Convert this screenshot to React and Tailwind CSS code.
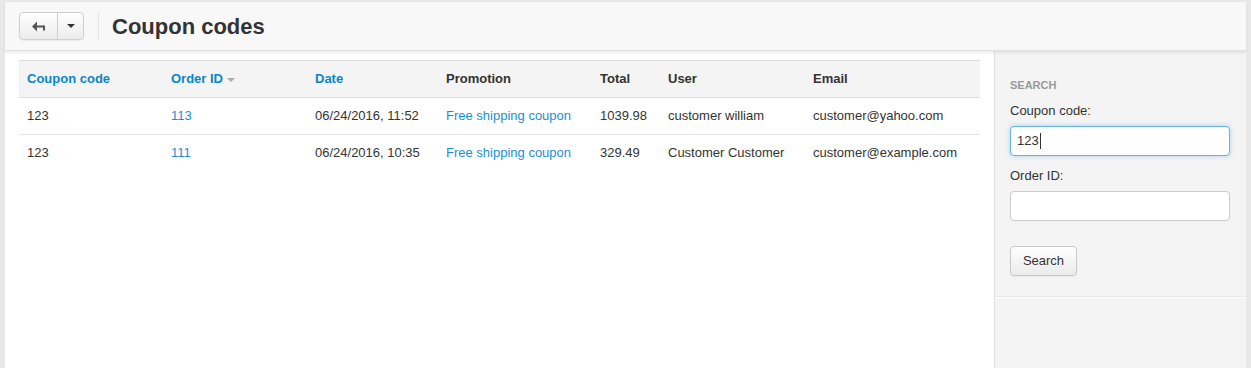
import React from "react";

const rows = [
  { code: "123", order: "113", date: "06/24/2016, 11:52", promo: "Free shipping coupon", total: "1039.98", user: "customer william", email: "customer@yahoo.com" },
  { code: "123", order: "111", date: "06/24/2016, 10:35", promo: "Free shipping coupon", total: "329.49", user: "Customer Customer", email: "customer@example.com" },
];

export default function App() {
  return (
    <div className="h-[368px] w-[1251px] overflow-hidden bg-[#e8e8e8] px-[5px] pt-[2px] text-[13px] text-[#333]" style={{ fontFamily: '"Liberation Sans", Arial, sans-serif' }}>
      <div className="flex h-full flex-col bg-white">
        <div className="relative z-10 flex h-[49px] items-center border-b border-[#e2e2e2] bg-[#f8f8f8] pl-[14px] shadow-[0_2px_3px_rgba(0,0,0,0.08)]">
          <div className="flex h-[28px] rounded-[4px] border border-[#cfcfcf] bg-gradient-to-b from-white to-[#ececec] shadow-[0_1px_1px_rgba(0,0,0,0.05)]">
            <div className="flex w-[38px] items-center justify-center border-r border-[#cfcfcf]">
              <svg width="16" height="11" viewBox="0 0 16 11">
                <path d="M6 0.5 L1 5.5 L6 10.5 Z" fill="#555" />
                <rect x="5" y="4.5" width="8" height="2" fill="#555" />
                <rect x="12" y="4.5" width="2" height="5" fill="#555" />
              </svg>
            </div>
            <div className="flex w-[25px] items-center justify-center">
              <svg width="8" height="4" viewBox="0 0 8 4"><path d="M0 0 H8 L4 4 Z" fill="#333" /></svg>
            </div>
          </div>
          <div className="ml-[14px] h-[28px] w-px bg-[#e4e4e4]" />
          <h1 className="ml-[13px] text-[22px] font-bold text-[#333]">Coupon codes</h1>
        </div>
        <div className="flex flex-1">
          <div className="flex-1 px-[14px] pt-[9px]">
            <table className="w-[961px] border-collapse">
              <thead>
                <tr className="h-[37px] border-y border-[#dedede] bg-[#f4f4f4] text-left">
                  <th className="w-[144px] pl-[8px] font-bold text-[#0a86c8]">Coupon code</th>
                  <th className="w-[144px] pl-[8px] font-bold text-[#0a86c8]">
                    Order ID
                    <svg className="ml-[4px] inline-block" width="8" height="4" viewBox="0 0 8 4"><path d="M0 0 H8 L4 4 Z" fill="#aaa" /></svg>
                  </th>
                  <th className="w-[131px] pl-[8px] font-bold text-[#0a86c8]">Date</th>
                  <th className="w-[154px] pl-[8px] font-bold">Promotion</th>
                  <th className="w-[68px] pl-[8px] font-bold">Total</th>
                  <th className="w-[145px] pl-[8px] font-bold">User</th>
                  <th className="pl-[8px] font-bold">Email</th>
                </tr>
              </thead>
              <tbody>
                {rows.map((r, i) => (
                  <tr key={i} className={i === 0 ? "h-[37px] border-b border-[#e4e4e4]" : "h-[35px]"}>
                    <td className="pl-[8px]">{r.code}</td>
                    <td className="pl-[8px] text-[#1a8fd6]">{r.order}</td>
                    <td className="pl-[8px]">{r.date}</td>
                    <td className="pl-[8px] text-[#1a8fd6]">{r.promo}</td>
                    <td className="pl-[8px]">{r.total}</td>
                    <td className="pl-[8px]">{r.user}</td>
                    <td className="pl-[8px]">{r.email}</td>
                  </tr>
                ))}
              </tbody>
            </table>
          </div>
          <div className="w-[252px] border-l border-[#e2e2e2] bg-[#f4f4f4]">
            <div className="border-b border-[#e6e6e6] px-[15px] pb-[20px] pt-[27px] shadow-[0_1px_0_#fff]">
              <div className="text-[11px] font-bold uppercase leading-[14px] text-[#999]">Search</div>
              <div className="mt-[11px] leading-[16px]">Coupon code:</div>
              <div className="mt-[7px] flex h-[30px] w-[220px] items-center rounded-[4px] border border-[#66afe9] bg-white px-[6px] shadow-[0_0_5px_rgba(102,175,233,0.5)]">
                123<span className="ml-px inline-block h-[16px] w-px bg-[#333]" />
              </div>
              <div className="mt-[12px] leading-[16px]">Order ID:</div>
              <div className="mt-[7px] h-[30px] w-[220px] rounded-[4px] border border-[#cccccc] bg-white" />
              <button className="mt-[25px] h-[30px] w-[67px] rounded-[4px] border border-[#c8c8c8] bg-gradient-to-b from-white to-[#ebebeb] text-[13px] text-[#333] shadow-[0_1px_1px_rgba(0,0,0,0.05)]">Search</button>
            </div>
          </div>
        </div>
      </div>
    </div>
  );
}
